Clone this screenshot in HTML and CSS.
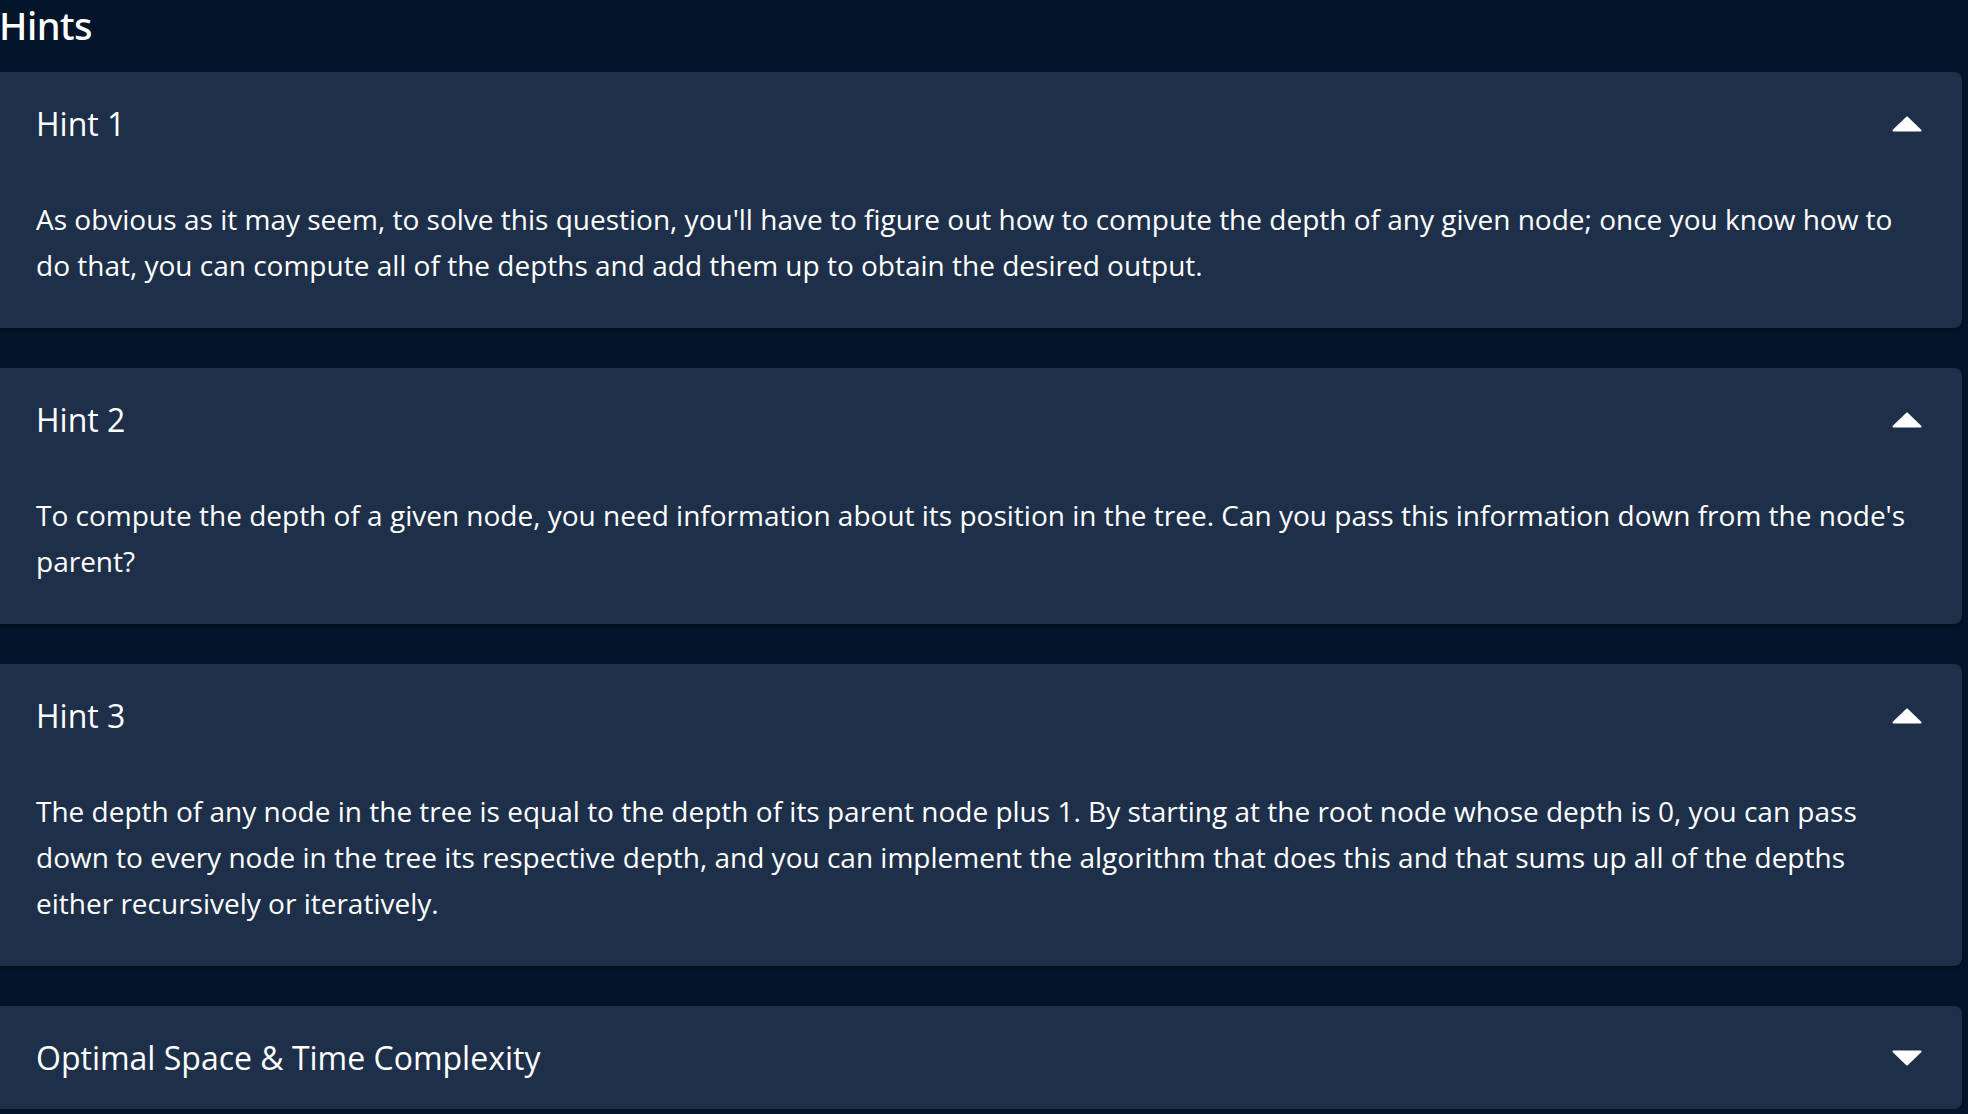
FILE: index.html
```html
<!DOCTYPE html>
<html lang="en">
<head>
<meta charset="utf-8">
<title>Hints</title>
<link rel="stylesheet" href="styles.css">
</head>
<body>
<main class="page">
  <h1 class="title">Hints</h1>
  <section class="card">
    <div class="card-head">
      <span class="card-title">Hint 1</span>
      <svg class="chev" width="30" height="16" viewBox="0 0 30 16"><path d="M15 1.5 L28.5 14.5 L1.5 14.5 Z" fill="#fff" stroke="#fff" stroke-width="2" stroke-linejoin="round"/></svg>
    </div>
    <p class="card-body">As obvious as it may seem, to solve this question, you'll have to figure out how to compute the depth of any given node; once you know how to do that, you can compute all of the depths and add them up to obtain the desired output.</p>
  </section>
  <section class="card">
    <div class="card-head">
      <span class="card-title">Hint 2</span>
      <svg class="chev" width="30" height="16" viewBox="0 0 30 16"><path d="M15 1.5 L28.5 14.5 L1.5 14.5 Z" fill="#fff" stroke="#fff" stroke-width="2" stroke-linejoin="round"/></svg>
    </div>
    <p class="card-body">To compute the depth of a given node, you need information about its position in the tree. Can you pass this information down from the node's parent?</p>
  </section>
  <section class="card">
    <div class="card-head">
      <span class="card-title">Hint 3</span>
      <svg class="chev" width="30" height="16" viewBox="0 0 30 16"><path d="M15 1.5 L28.5 14.5 L1.5 14.5 Z" fill="#fff" stroke="#fff" stroke-width="2" stroke-linejoin="round"/></svg>
    </div>
    <p class="card-body">The depth of any node in the tree is equal to the depth of its parent node plus 1. By starting at the root node whose depth is 0, you can pass down to every node in the tree its respective depth, and you can implement the algorithm that does this and that sums up all of the depths either recursively or iteratively.</p>
  </section>
  <section class="card">
    <div class="card-head">
      <span class="card-title">Optimal Space &amp; Time Complexity</span>
      <svg class="chev" width="30" height="16" viewBox="0 0 30 16"><path d="M15 14.5 L28.5 1.5 L1.5 1.5 Z" fill="#fff" stroke="#fff" stroke-width="2" stroke-linejoin="round"/></svg>
    </div>
  </section>
</main>
</body>
</html>
```
FILE: styles.css
```css
html, body {
  margin: 0;
  padding: 0;
  background: #03152a;
  color: #ffffff;
  font-family: "Open Sans", "Noto Sans", sans-serif;
}

.page {
  width: 1962px;
  display: flex;
  flex-direction: column;
  gap: 40px;
}

.title {
  margin: -1px 0 -19px -1px;
  font-family: "Noto Sans", "Open Sans", sans-serif;
  font-weight: 500;
  font-size: 38px;
  line-height: 52px;
  letter-spacing: -0.5px;
}

.card {
  background: #1e3049;
  border-radius: 0 8px 8px 0;
  box-shadow: 0 2px 4px rgba(0, 0, 0, 0.35);
  padding: 28px 40px 27px 36px;
}

.card-head {
  display: flex;
  align-items: center;
  justify-content: space-between;
  height: 48px;
}

.card-title {
  font-size: 32px;
  line-height: 48px;
}

.chev {
  display: block;
}

.card-body {
  margin: 48px 0 13px 0;
  font-size: 28px;
  line-height: 46px;
}
```
